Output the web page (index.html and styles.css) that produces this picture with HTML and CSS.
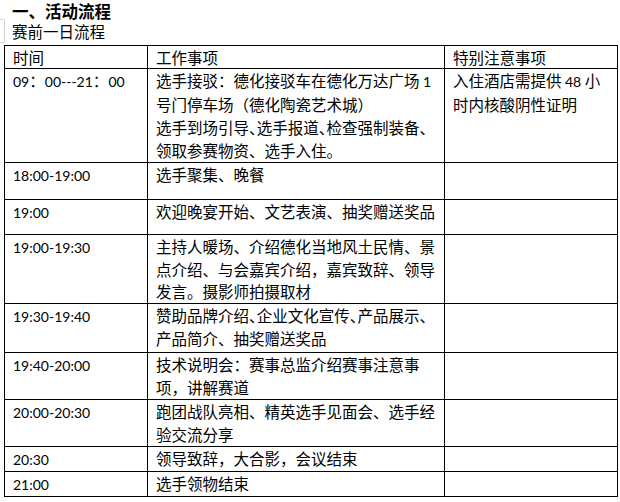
FILE: index.html
```html
<!DOCTYPE html>
<html lang="zh-CN">
<head>
<meta charset="utf-8">
<title>活动流程</title>
<link rel="stylesheet" href="styles.css">
</head>
<body>
<div class="page">
  <h1 class="title">一、活动流程</h1>
  <p class="subtitle">赛前一日流程</p>
  <table class="schedule">
    <colgroup>
      <col class="c-time">
      <col class="c-work">
      <col class="c-note">
    </colgroup>
    <tr class="r-head">
      <td>时间</td>
      <td>工作事项</td>
      <td>特别注意事项</td>
    </tr>
    <tr class="r1">
      <td><span class="num">09</span>：<span class="num">00---21</span>：<span class="num">00</span></td>
      <td>选手接驳：德化接驳车在德化万达广场 <span class="num">1</span><br>号门停车场（德化陶瓷艺术城）<br><span class="tight">选手到场引导、选手报道、检查强制装备、</span><br>领取参赛物资、选手入住。</td>
      <td>入住酒店需提供 <span class="num">48</span> 小<br>时内核酸阴性证明</td>
    </tr>
    <tr class="r2">
      <td><span class="num">18:00-19:00</span></td>
      <td>选手聚集、晚餐</td>
      <td></td>
    </tr>
    <tr class="r3">
      <td><span class="num">19:00</span></td>
      <td>欢迎晚宴开始、文艺表演、抽奖赠送奖品</td>
      <td></td>
    </tr>
    <tr class="r4">
      <td><span class="num">19:00-19:30</span></td>
      <td>主持人暖场、介绍德化当地风土民情、景<br>点介绍、与会嘉宾介绍，嘉宾致辞、领导<br>发言。摄影师拍摄取材</td>
      <td></td>
    </tr>
    <tr class="r5">
      <td><span class="num">19:30-19:40</span></td>
      <td><span class="tight">赞助品牌介绍、企业文化宣传、产品展示、</span><br>产品简介、抽奖赠送奖品</td>
      <td></td>
    </tr>
    <tr class="r6">
      <td><span class="num">19:40-20:00</span></td>
      <td>技术说明会：赛事总监介绍赛事注意事<br>项，讲解赛道</td>
      <td></td>
    </tr>
    <tr class="r7">
      <td><span class="num">20:00-20:30</span></td>
      <td>跑团战队亮相、精英选手见面会、选手经<br>验交流分享</td>
      <td></td>
    </tr>
    <tr class="r8">
      <td><span class="num">20:30</span></td>
      <td>领导致辞，大合影，会议结束</td>
      <td></td>
    </tr>
    <tr class="r9">
      <td><span class="num">21:00</span></td>
      <td>选手领物结束</td>
      <td></td>
    </tr>
  </table>
</div>
</body>
</html>
```

FILE: styles.css
```css
html, body {
  margin: 0;
  padding: 0;
  background: #ffffff;
}

body {
  font-family: "Noto Sans CJK SC", sans-serif;
  color: #000000;
  font-size: 15.5px;
}

.page {
  width: 620px;
  height: 502px;
  overflow: hidden;
  position: relative;
}

.title {
  margin: 0;
  padding: 1px 0 0 12px;
  font-size: 16.5px;
  font-weight: 700;
  line-height: 20px;
  height: 20px;
}

.subtitle {
  margin: 0 0 3px 0;
  padding: 0 0 0 12px;
  font-size: 15.5px;
  line-height: 21px;
  height: 21px;
  position: relative;
}

.subtitle::before {
  content: "";
  position: absolute;
  left: 0;
  top: -2px;
  width: 4px;
  height: 22px;
  border: 1px solid #d0d0d0;
  border-left: none;
  border-radius: 0 2px 2px 0;
}

.schedule {
  border-collapse: collapse;
  table-layout: fixed;
  margin-left: 4px;
  width: 613px;
}

.c-time { width: 143px; }
.c-work { width: 297px; }
.c-note { width: 173px; }

.schedule td {
  border: 1px solid #000000;
  padding: 0 4px 0 8px;
  vertical-align: top;
  line-height: 23px;
  white-space: nowrap;
  overflow: visible;
}

.num {
  font-family: Lato, "Noto Sans CJK SC", sans-serif;
  font-size: 14px;
}

.tight {
  font-feature-settings: "halt" 1;
}

.r-head td { height: 22px; line-height: 22px; }
.r1 td { height: 93px; }
.r2 td { height: 36px; }
.r3 td { height: 34px; }
.r4 td { height: 68px; line-height: 22.6px; }
.r5 td { height: 48px; }
.r6 td { height: 46px; }
.r7 td { height: 46px; }
.r8 td { height: 23px; }
.r9 td { height: 23px; }
```
